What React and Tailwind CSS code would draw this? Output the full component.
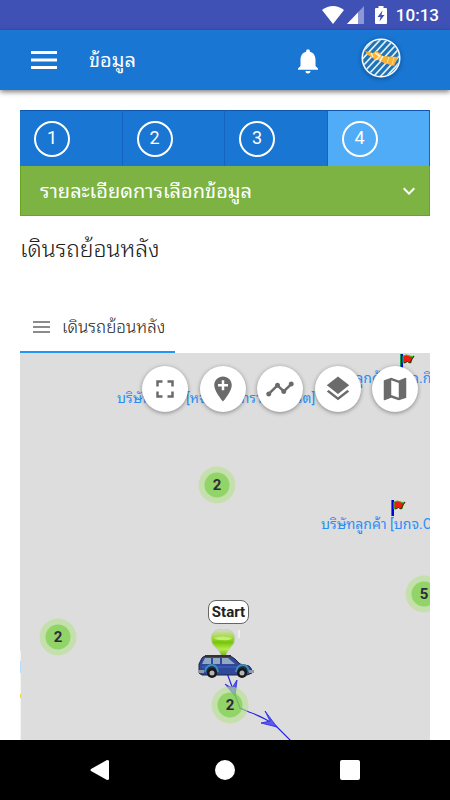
import React, { useState } from "react";
import {
  MdAddLocation,
  MdExpandMore,
  MdFullscreen,
  MdLayers,
  MdMap,
  MdNotifications,
  MdTimeline,
} from "react-icons/md";

const steps = [1, 2, 3, 4];

const tools = [
  { label: "Fullscreen", Icon: MdFullscreen },
  { label: "Add location", Icon: MdAddLocation },
  { label: "Timeline", Icon: MdTimeline },
  { label: "Layers", Icon: MdLayers },
  { label: "Map type", Icon: MdMap },
];

// positions are relative to the top left corner of the map
const clusters = [
  { x: 197, y: 132, count: 2 },
  { x: 38, y: 284, count: 2 },
  { x: 404, y: 241, count: 5 },
  { x: 210, y: 352, count: 2 },
];

const places = [
  { x: 97, y: 35, name: "บริษัทลูกค้า [หจก.ไชยทรานสปอร์ต]" },
  { x: 301, y: 15, name: "บริษัทลูกค้า [บจก.กิ" },
  { x: 301, y: 161, name: "บริษัทลูกค้า [บกจ.C" },
];

const flags = [
  { x: 380, y: 1 },
  { x: 371, y: 147 },
];

function StatusBar() {
  return (
    <div className="flex h-[30px] shrink-0 items-center justify-end bg-[#3f51b5] pr-[11px] text-white">
      <svg width="22" height="18" viewBox="0 0 22 18" className="mr-[3px]">
        <path d="M0 4Q11-4 22 4L11 18Z" fill="currentColor" />
      </svg>
      <svg width="17" height="18" viewBox="0 0 17 18" className="mr-[11px]">
        <path d="M17 0V18H0Z" fill="#8c97d3" />
        <path d="M11 6.5V18H0Z" fill="currentColor" />
      </svg>
      <svg width="12" height="18" viewBox="0 0 12 18" className="mr-[9px]">
        <path d="M3.5 0H8.5V2H11Q12 2 12 3V17Q12 18 11 18H1Q0 18 0 17V3Q0 2 1 2H3.5Z" fill="currentColor" />
        <path d="M7.5 4.5L2.5 11H5.5L4.5 15.5L9.5 9H6.5Z" fill="#3f51b5" />
      </svg>
      <span className="text-[17px] leading-6 font-medium">10:13</span>
    </div>
  );
}

function Logo() {
  return (
    <svg width="40" height="40" viewBox="0 0 40 40">
      <defs>
        <clipPath id="logo-clip">
          <circle cx="20" cy="20" r="18" />
        </clipPath>
      </defs>
      <circle cx="20" cy="20" r="19.5" fill="#fff" />
      <circle cx="20" cy="20" r="18" fill="#1f74b8" />
      <g clipPath="url(#logo-clip)" stroke="#e3eff8" strokeWidth="1.7">
        <path d="M-6 22L24-10M-2 25L29-9M2 28L34-7M4 33L39-5M8 36L44-3M13 38L48 0M18 40L52 3M23 41L56 6M28 42L60 9" />
      </g>
      <path d="M4 13L12 15L15 13L19 15L21 18L37 19L33 28L23 25L17 22L13 21L7 17Z" fill="#f9b233" />
      <path d="M14 15L19 18L15 22M22 18L19 23M10 15L12 19" stroke="#fff3d6" strokeWidth="1.5" fill="none" />
      <path d="M28 19L26 25M33 19L31 27" stroke="#ffd888" fill="none" />
    </svg>
  );
}

function AppBar() {
  return (
    <header className="z-10 flex h-[60px] shrink-0 items-center bg-[#1976d2] pr-[49px] pl-[31px] text-white shadow-[0_2px_5px_rgba(0,0,0,0.5)]">
      <button type="button" aria-label="Menu" className="mr-[32px]">
        <svg width="26" height="18" viewBox="0 0 26 18" fill="currentColor">
          <path d="M0 0H26V3H0ZM0 7.5H26V10.5H0ZM0 15H26V18H0Z" />
        </svg>
      </button>
      <h1 className="flex-1 text-[20px] leading-7">ข้อมูล</h1>
      <button type="button" aria-label="Notifications" className="mr-[38px] pt-[2px]">
        <MdNotifications size={30} />
      </button>
      <button
        type="button"
        aria-label="Account"
        className="mb-1 rounded-full shadow-[0_1px_4px_rgba(0,0,0,0.3)]"
      >
        <Logo />
      </button>
    </header>
  );
}

function Flag({ x, y }) {
  return (
    <svg className="absolute" style={{ left: x, top: y }} width="15" height="16" viewBox="0 0 15 16">
      <path d="M0 0H3V16H0Z" fill="#0000e0" />
      <path d="M0 0H1V16H0Z" fill="#00a060" />
      <path d="M3 2Q6 0 10 2Q12 3 14 2L12 5L11 9Q8 6 3 9Z" fill="#f01a10" stroke="#16d416" />
      <path d="M4 9Q8 6 10 9L12 5L14 2" fill="none" stroke="#501010" />
    </svg>
  );
}

function Cluster({ x, y, count }) {
  return (
    <div
      className="absolute flex size-[37px] -translate-x-1/2 -translate-y-1/2 items-center justify-center rounded-full bg-[#b5e28c]/60"
      style={{ left: x, top: y }}
    >
      <div className="flex size-[25px] items-center justify-center rounded-full bg-[#6ecc39]/60 text-[15px] font-bold text-[#33283c]">
        {count}
      </div>
    </div>
  );
}

function Route() {
  return (
    <svg className="absolute top-0 left-0 size-full">
      <path
        d="M207 320L215 342L220 355L229 359Q244 364 256 373L271 388"
        fill="none"
        stroke="#2424e8"
        strokeWidth="1.2"
      />
      <g fill="#5a5aec" stroke="#2424e8" strokeWidth="0.8">
        <path d="M215 343L205 331L212 335L217 327Z" />
        <path d="M257 374L241 370L250 368L245 358Z" />
      </g>
      <path d="M0 298H1V388H0Z" fill="#f4f4f2" />
      <path d="M0 308H1V320H0Z" fill="#b5dcff" />
      <path d="M0 341H1V345H0Z" fill="#e9dc4b" />
    </svg>
  );
}

function Car() {
  return (
    <svg className="absolute top-[276px] left-[177px]" width="57" height="52" viewBox="0 0 57 52">
      <defs>
        <linearGradient id="pin" x1="0" y1="0" x2="0" y2="1">
          <stop offset="0" stopColor="#d8dcd0" />
          <stop offset="0.3" stopColor="#a4db45" />
          <stop offset="0.5" stopColor="#79c50c" />
          <stop offset="0.75" stopColor="#b5ec4a" />
          <stop offset="1" stopColor="#6fae12" />
        </linearGradient>
      </defs>
      <path d="M14 9Q15 0 26 0Q37 0 38 9Q38 15 33 19Q30 22 29 27H24Q23 22 19 19Q14 15 14 9Z" fill="url(#pin)" stroke="#c9ccc6" />
      <path d="M17 9Q25 6 35 9Q33 12 25 11Q19 11 17 9Z" fill="#c4ed72" />
      <path d="M42 1V9" stroke="#eee" strokeWidth="2" />
      <path d="M2 44V35L5 29Q6 27 10 27H31Q35 27 38 30L43 35L52 37Q55 39 55 44L50 46H5Z" fill="#2f489c" stroke="#1c2438" />
      <path d="M5 35L8 29H14V35ZM16 29H23V35H16ZM25 29H31L38 35H25Z" fill="#93a9c3" />
      <path d="M8 27H34" stroke="#333" strokeWidth="2" />
      <path d="M5 38H51" stroke="#4867b6" />
      <path d="M8 43Q9 36 15 36Q20 36 21 43M39 43Q40 36 46 36Q51 36 52 43" fill="#243044" stroke="#3990bd" strokeWidth="2" />
      <path d="M1 41H7V44H1ZM52 41H57V44H52Z" fill="#929aa3" />
      <circle cx="15" cy="44" r="5" fill="#171717" />
      <circle cx="15" cy="44" r="2.5" fill="#b5b5b5" />
      <circle cx="45" cy="44" r="5" fill="#171717" />
      <circle cx="45" cy="44" r="2.5" fill="#b5b5b5" />
    </svg>
  );
}

function MapView() {
  return (
    <div className="relative min-h-0 flex-1 overflow-hidden bg-[#dddddd]">
      {places.map((p) => (
        <span
          key={p.name}
          className="absolute text-[14px] leading-5 whitespace-nowrap text-[#2b8ef5]"
          style={{ left: p.x, top: p.y }}
        >
          {p.name}
        </span>
      ))}
      {flags.map((f) => (
        <Flag key={f.y} x={f.x} y={f.y} />
      ))}

      <Route />
      <Car />
      <div className="absolute top-[247px] left-[188px] flex h-[24px] w-[41px] items-center justify-center rounded-[8px] border border-[#666] bg-white text-[15px] font-bold text-[#222]">
        Start
      </div>
      {clusters.map((c) => (
        <Cluster key={`${c.x}-${c.y}`} {...c} />
      ))}

      <div className="absolute top-[13px] right-[12px] flex w-[276px] justify-between">
        {tools.map(({ label, Icon }) => (
          <button
            key={label}
            type="button"
            aria-label={label}
            className="flex size-[46px] items-center justify-center rounded-full bg-white text-[#6b6b6b] shadow-[0_1px_4px_rgba(0,0,0,0.4)]"
          >
            <Icon size={30} />
          </button>
        ))}
      </div>
    </div>
  );
}

function NavigationBar() {
  return (
    <nav className="flex h-[60px] shrink-0 items-center justify-around bg-black px-[37px] text-white">
      <button type="button" aria-label="Back">
        <svg width="20" height="20" viewBox="0 0 20 20">
          <path d="M1 9L17 0Q19 0 19 1V19Q19 20 17 20L1 11Q0 10 1 9Z" fill="currentColor" />
        </svg>
      </button>
      <button type="button" aria-label="Home" className="size-5 rounded-full bg-white" />
      <button type="button" aria-label="Recent apps" className="size-5 rounded-[2px] bg-white" />
    </nav>
  );
}

export default function App() {
  const [step, setStep] = useState(4);

  return (
    <div className="flex h-screen flex-col bg-white font-[Roboto,'Noto_Sans_Thai_Looped','Noto_Looped_Thai',Loma,Garuda,Waree,'Noto_Sans_Thai','Noto_Sans',sans-serif]">
      <StatusBar />
      <AppBar />

      <main className="flex min-h-0 flex-1 flex-col px-5 pt-5">
        <div className="grid shrink-0 grid-cols-4">
          {steps.map((n) => (
            <button
              key={n}
              type="button"
              onClick={() => setStep(n)}
              className={`flex h-[56px] items-center border-t border-r border-t-[#0d56b0] border-r-[#1565c0] pl-[14px] ${
                n === step ? "bg-[#50acf6]" : "bg-[#1976d2]"
              }`}
            >
              <span className="flex size-9 items-center justify-center rounded-full border-2 border-white pb-[2px] text-[18px] text-white">
                {n}
              </span>
            </button>
          ))}
        </div>

        <button
          type="button"
          className="flex h-[50px] shrink-0 items-center justify-between border border-t-0 border-[#68a61f] bg-[#7cb342] pr-2 pl-[19px] text-white"
        >
          <span className="text-[20px]">รายละเอียดการเลือกข้อมูล</span>
          <MdExpandMore size={24} />
        </button>

        <h2 className="mt-4 shrink-0 text-[23px] leading-9 font-light text-[#212121]">เดินรถย้อนหลัง</h2>

        <div className="mt-[34px] flex shrink-0">
          <button
            type="button"
            className="flex h-[51px] w-[155px] items-center gap-3 border-b-2 border-[#2196f3] pl-[13px] text-[#333]"
          >
            <svg width="17" height="12" viewBox="0 0 17 12" fill="none" stroke="#666" strokeWidth="1.6">
              <path d="M0 1H17M0 6H17M0 11H17" />
            </svg>
            <span className="text-[17px] leading-6 font-light text-[#212121]">เดินรถย้อนหลัง</span>
          </button>
        </div>

        <MapView />
      </main>

      <NavigationBar />
    </div>
  );
}
